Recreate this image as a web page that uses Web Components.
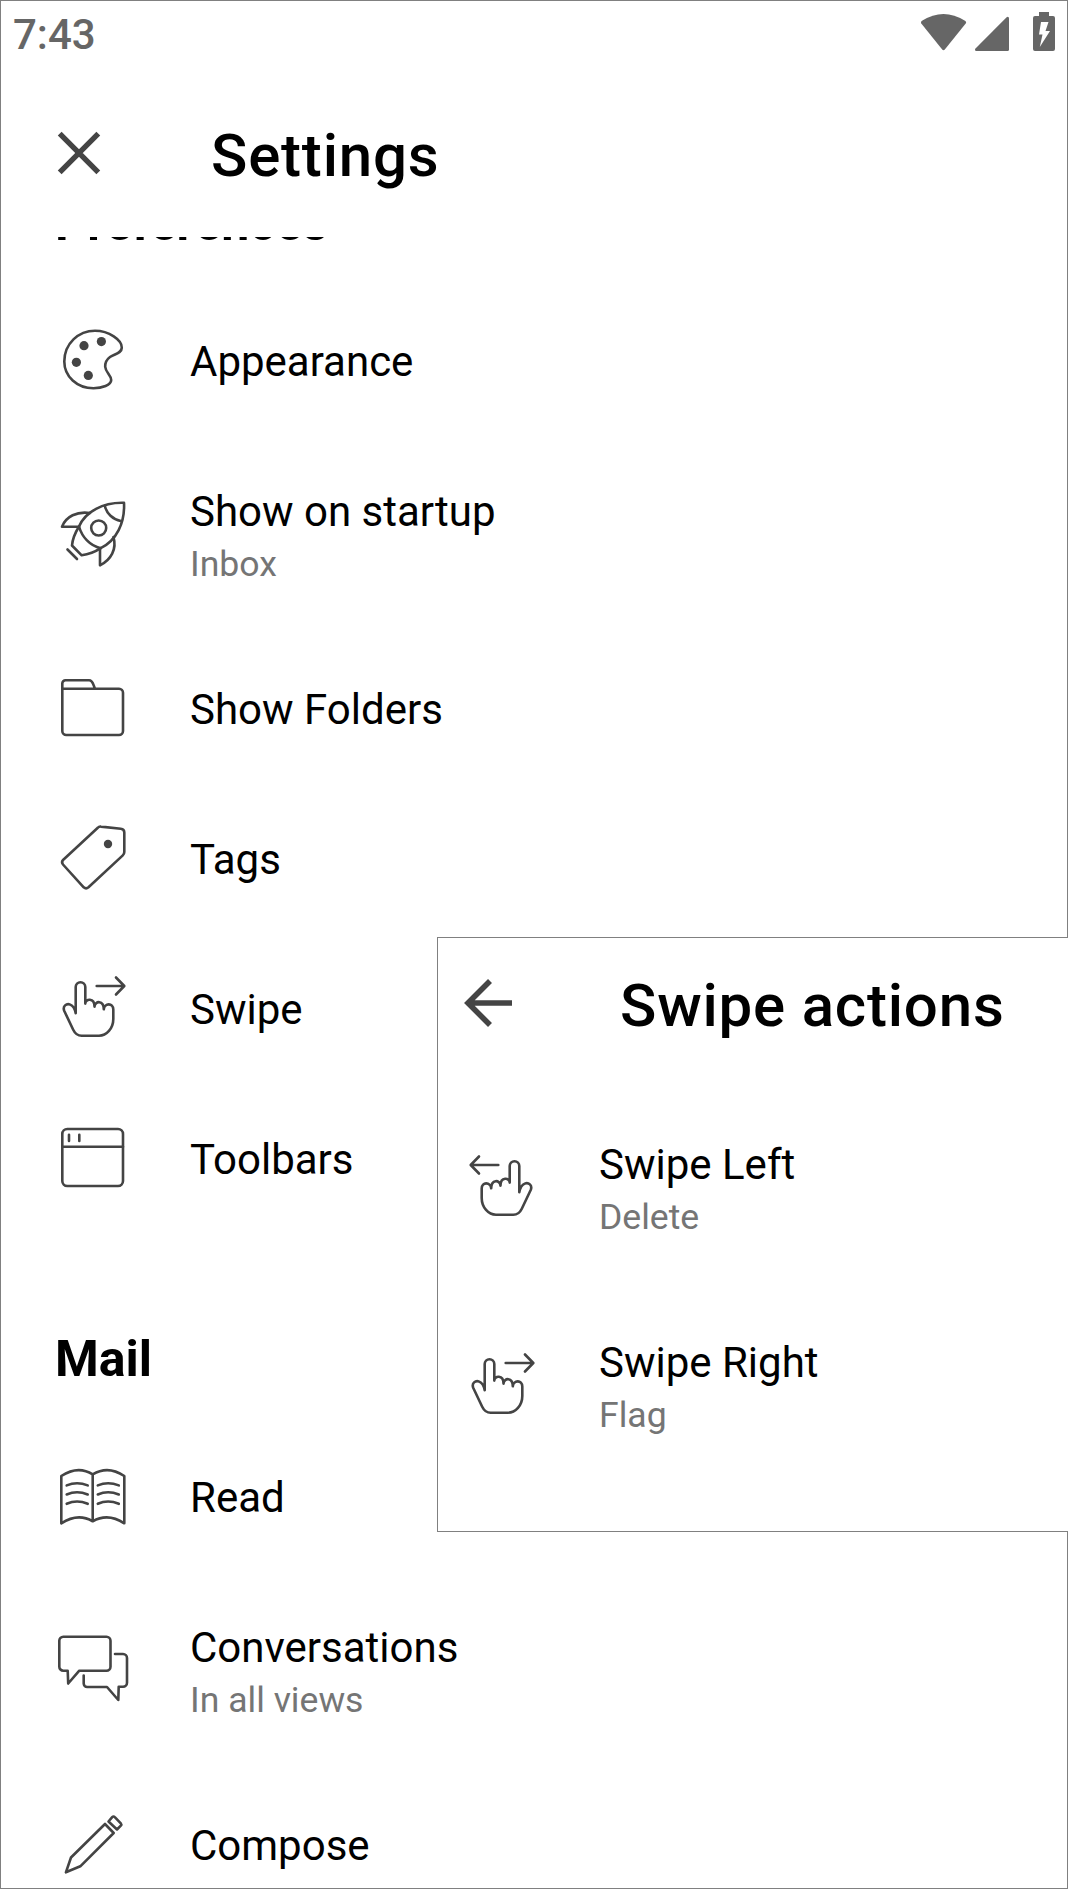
<!DOCTYPE html>
<html lang="en">
<head>
<meta charset="utf-8">
<title>Settings</title>
<style>
    html, body {
        margin: 0;
        padding: 0;
        background: #fff;
    }

    body {
        height: 1889px;
        overflow: hidden;
        font-family: Roboto, "Liberation Sans", sans-serif;
        color: #000;
    }
</style>
</head>
<body>
<settings-screen>
    <status-bar slot="status">7:43</status-bar>
    <title-bar slot="title" icon="close">Settings</title-bar>

    <section-title class="first">Preferences</section-title>
    <setting-row icon="palette">Appearance</setting-row>
    <setting-row icon="rocket">Show on startup<span slot="value">Inbox</span></setting-row>
    <setting-row icon="folder">Show Folders</setting-row>
    <setting-row icon="tag">Tags</setting-row>
    <setting-row icon="swipe-right">Swipe</setting-row>
    <setting-row icon="toolbar">Toolbars</setting-row>
    <section-title>Mail</section-title>
    <setting-row icon="book">Read</setting-row>
    <setting-row icon="chat">Conversations<span slot="value">In all views</span></setting-row>
    <setting-row icon="pencil">Compose</setting-row>

    <swipe-panel slot="overlay">
        <title-bar slot="title" icon="back" compact>Swipe actions</title-bar>
        <setting-row icon="swipe-left">Swipe Left<span slot="value">Delete</span></setting-row>
        <setting-row icon="swipe-right">Swipe Right<span slot="value">Flag</span></setting-row>
    </swipe-panel>
</settings-screen>

<script>
    // Line icons, all drawn on a 72x72 grid
    const HAND = `
        <path d="M18.7 42.3V16.1a4.8 4.8 0 0 1 9.6 0V32.6C28.3 27.5 37.5 26.5 37.5 35.6C38 29.5 46.8 29 46.8 38.3C47.3 32 56.3 31.5 56.3 38.5V48C56.3 57.5 49.5 64.7 42 64.7H24.7C20.5 64.7 18 62.5 16.2 58.7L7.3 40C5.3 35 9.5 32.2 13.2 33.6C16.5 34.8 18 38.6 18.7 42.3Z"/>
        <path d="M39.7 15H67M59 6.5L67.3 15L59 23.5"/>`;

    const ICONS = {
        palette: `
            <path d="M38 7.7C52 7.7 65 17 64.8 24.6C64.6 30.5 58 30.6 53 34C49 37 48 40 48.2 43.8C48.6 49.5 54.2 52 54.2 57C54.2 62 45 65.2 36.5 65.2C20 65.2 7.3 53.5 7.3 38.5C7.3 20.5 21.5 7.7 38 7.7Z"/>
            <g fill="currentColor" stroke="none">
                <circle cx="27" cy="22.7" r="4.6"/><circle cx="44.4" cy="18.6" r="4.6"/>
                <circle cx="19.4" cy="39.3" r="4.6"/><circle cx="31.3" cy="52.4" r="4.6"/>
            </g>`,
        rocket: `
            <path d="M67 5.8C46 5.2 28.5 14.5 22 29.5C25 40 33 49 43.7 51.2C59.5 43.5 68 26 67 5.8Z"/>
            <path d="M47.8 8.8C49.5 16.5 56 22.5 63.8 24"/>
            <circle cx="41.7" cy="31" r="7.5"/>
            <path d="M22 29.5C18 36 15.5 42 15 48.5L24.7 58.3C31 57.5 38 55 43.7 51.2"/>
            <path d="M33 16C20 14 9 19.5 5 29.7H22M56.5 40C60 52 54 63 43 68.3V51.5M10.5 52.5L20 62"/>`,
        folder: `
            <path d="M5.3 17.7H62a4 4 0 0 1 4 4V60a4 4 0 0 1-4 4H9.3a4 4 0 0 1-4-4V12.5a3.2 3.2 0 0 1 3.2-3.2H32C36 9.3 36 13.5 38 17.7"/>`,
        tag: `
            <path d="M44 5.6L63.8 7.8Q67.3 8.2 67.3 11.6V31Q67.3 33 65.8 34.4L31.5 66.3Q29 68.4 26.7 66.3L6 43.5Q4 41 6.3 38.7L40.8 6.8Q42 5.3 44 5.6Z"/>
            <circle cx="51" cy="23" r="4.2" fill="currentColor" stroke="none"/>`,
        'swipe-right': HAND,
        'swipe-left': `<g transform="matrix(-1 0 0 1 72 0)">${HAND}</g>`,
        toolbar: `
            <rect x="5.3" y="8" width="60.7" height="57" rx="5"/>
            <path d="M5.3 25.8H66M12 13.7V20M22.3 13.7V20"/>`,
        book: `
            <path d="M4.3 17Q21 6 35.7 15.4Q51 6 67.3 17V64.3Q51 53.5 35.7 62.3Q21 53.5 4.3 64.3ZM35.7 15.4V62.3"/>
            <path d="M9.7 26.4Q20 22 30.7 26.4M9.7 35.5Q20 31 30.7 35.5M9.7 44.8Q20 40.3 30.7 44.8M40.8 26.4Q51 22 61.8 26.4M40.8 35.5Q51 31 61.8 35.5M40.8 44.8Q51 40.3 61.8 44.8"/>`,
        chat: `
            <path d="M6.3 3.7H49.5a4 4 0 0 1 4 4V33.7a4 4 0 0 1-4 4H22.3L11.2 50.5L10.7 37.7H6.3a4 4 0 0 1-4-4V7.7a4 4 0 0 1 4-4Z"/>
            <path d="M58 21H66a4 4 0 0 1 4 4V49.7a4 4 0 0 1-4 4H61.7L61.3 67L50 54H30.2a3.5 3.5 0 0 1-3.5-3.5V42.5"/>`,
        pencil: `
            <path d="M8.9 65.3L14 50.5L48 17L56.7 26L23.3 59.3Z"/>
            <path d="M51.5 14.5L55.2 10.2Q56.5 8.8 57.8 10.2L63.8 16.3Q64.8 17.5 63.8 18.6L60 22.5Z"/>`
    };

    // Thicker icons of the two title bars, on a 48x48 grid
    const NAV_ICONS = {
        close: '<path d="M4.7 4.7L43.3 43.3M43.3 4.7L4.7 43.3" stroke-width="5.4"/>',
        back: '<path d="M48 24H4M26 2L4 24L26 46" stroke-width="5.6"/>'
    };

    class StatusBar extends HTMLElement {
        constructor() {
            super();
            const root = this.attachShadow({mode: 'open'});
            root.innerHTML = `
                <style>
                    :host {
                        display: flex;
                        justify-content: space-between;
                        align-items: flex-start;
                        height: 64px;
                        box-sizing: border-box;
                        padding: 9px 10px 0 12px;
                        color: #666;
                        font-size: 42px;
                        font-weight: 500;
                        line-height: 49px;
                    }

                    svg {
                        display: block;
                        margin-top: 1px;
                        fill: currentColor;
                    }
                </style>
                <slot></slot>
                <svg width="138" height="42" viewBox="919 11 138 42" aria-hidden="true">
                    <path d="M921.3 23.6Q920.4 22 922 20.8Q943.5 7.2 965 20.8Q966.8 22 965.7 23.6L944.8 49.5Q943.5 51 942.2 49.5Z"/>
                    <path d="M1006.6 17.2Q1009 16 1009 18.8V49.5Q1009 51 1007.5 51H976.5Q974 50.8 975.5 48.5Z"/>
                    <path fill-rule="evenodd" d="M1039 12H1049V16H1053Q1055 16 1055 18V49Q1055 51 1053 51H1035Q1033 51 1033 49V18Q1033 16 1035 16H1039ZM1041 22L1039 34.5H1042.5L1039.8 47L1050 31H1045.5L1048.5 22Z"/>
                </svg>
            `;
        }
    }

    class TitleBar extends HTMLElement {
        connectedCallback() {
            const root = this.attachShadow({mode: 'open'});
            root.innerHTML = `
                <style>
                    :host {
                        display: flex;
                        align-items: center;
                        height: 172px;
                        box-sizing: border-box;
                        padding: 8px 0 0 54px;
                        font-size: 60px;
                        font-weight: 500;
                        letter-spacing: 0.8px;
                        gap: 108px;
                        line-height: 68px;
                    }

                    :host([compact]) {
                        height: 149px;
                        padding: 0 0 15px 26px;
                    }

                    svg {
                        flex: none;
                        color: #444;
                        fill: none;
                        stroke: currentColor;
                        margin-top: -5px;
                    }

                    span {
                        padding-top: 2px;
                    }
                </style>
                <svg width="48" height="48" viewBox="0 0 48 48" aria-hidden="true">${NAV_ICONS[this.getAttribute('icon')]}</svg>
                <span><slot></slot></span>
            `;
        }
    }

    class SectionTitle extends HTMLElement {
        constructor() {
            super();
            const root = this.attachShadow({mode: 'open'});
            root.innerHTML = `
                <style>
                    :host {
                        display: block;
                        height: 188px;
                        box-sizing: border-box;
                        padding: 97px 0 0 54px;
                        font-size: 50px;
                        font-weight: 700;
                        line-height: 60px;
                    }
                </style>
                <slot></slot>
            `;
        }
    }

    class SettingRow extends HTMLElement {
        connectedCallback() {
            const root = this.attachShadow({mode: 'open'});
            root.innerHTML = `
                <style>
                    :host {
                        display: flex;
                        align-items: flex-start;
                        gap: 61px;
                        padding: 39px 0 39px 56px;
                    }

                    svg {
                        flex: none;
                        align-self: center;
                        color: #444;
                        fill: none;
                        stroke: currentColor;
                        stroke-width: 2.6;
                        stroke-linecap: round;
                        stroke-linejoin: round;
                    }

                    .text {
                        display: flex;
                        flex-direction: column;
                        padding: 13px 0 3px;
                        font-size: 42px;
                        line-height: 52px;
                        white-space: nowrap;
                    }

                    ::slotted([slot=value]) {
                        color: #757575;
                        font-size: 35.6px;
                        line-height: 52px;
                    }
                </style>
                <svg width="72" height="72" viewBox="0 0 72 72" aria-hidden="true">${ICONS[this.getAttribute('icon')]}</svg>
                <div class="text">
                    <div><slot></slot></div>
                    <slot name="value"></slot>
                </div>
            `;
        }
    }

    // The second screen, laid over the lower right of the first
    class SwipePanel extends HTMLElement {
        constructor() {
            super();
            const root = this.attachShadow({mode: 'open'});
            root.innerHTML = `
                <style>
                    :host {
                        display: block;
                        box-sizing: border-box;
                        height: 595px;
                        border: 1px solid #808080;
                        border-right: 0;
                        background: #fff;
                    }

                    .rows {
                        margin-left: -28px;
                    }
                </style>
                <slot name="title"></slot>
                <div class="rows"><slot></slot></div>
            `;
        }
    }

    class SettingsScreen extends HTMLElement {
        constructor() {
            super();
            const root = this.attachShadow({mode: 'open'});
            root.innerHTML = `
                <style>
                    :host {
                        display: flex;
                        flex-direction: column;
                        position: relative;
                        box-sizing: border-box;
                        width: 1068px;
                        height: 1889px;
                        border: 1px solid #808080;
                        background: #fff;
                    }

                    .list {
                        flex: 1;
                        min-height: 0;
                        overflow: hidden;
                    }

                    /* the list is scrolled a little way down */
                    ::slotted(.first) {
                        margin-top: -141px;
                    }

                    .overlay {
                        position: absolute;
                        top: 936px;
                        left: 436px;
                        right: -1px;
                    }
                </style>
                <slot name="status"></slot>
                <slot name="title"></slot>
                <div class="list"><slot></slot></div>
                <div class="overlay"><slot name="overlay"></slot></div>
            `;
        }
    }

    customElements.define('status-bar', StatusBar);
    customElements.define('title-bar', TitleBar);
    customElements.define('section-title', SectionTitle);
    customElements.define('setting-row', SettingRow);
    customElements.define('swipe-panel', SwipePanel);
    customElements.define('settings-screen', SettingsScreen);
</script>
</body>
</html>
